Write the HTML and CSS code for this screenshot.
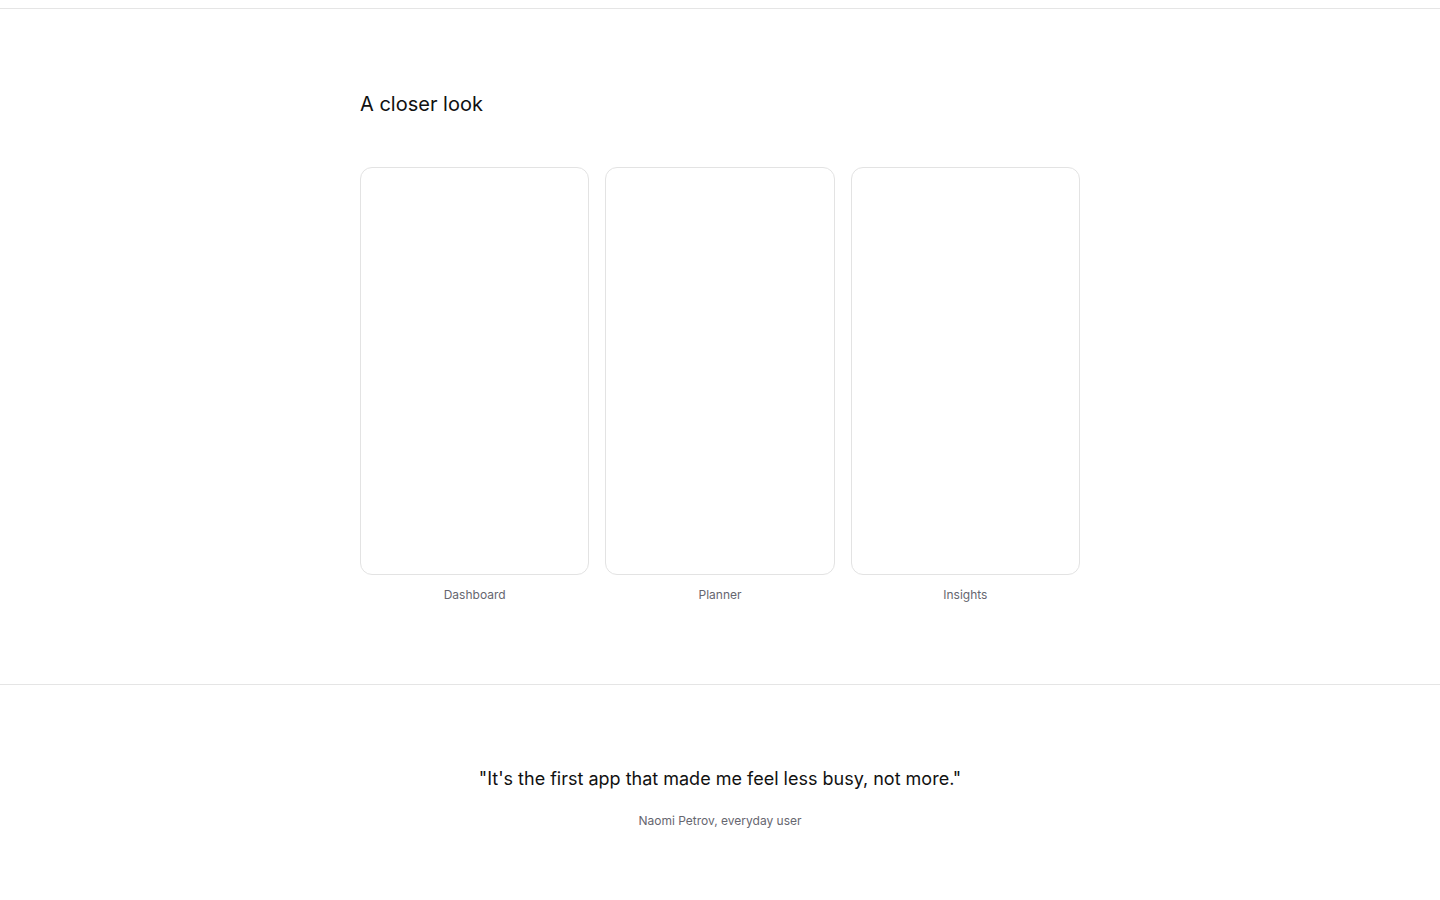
FILE: index.html
```html
<!DOCTYPE html>
<html lang="en">
<head>
<meta charset="utf-8">
<title>A closer look</title>
<link rel="stylesheet" href="styles.css">
</head>
<body>
<div class="topbar"></div>
<section class="gallery">
  <div class="container">
    <h2 class="heading">A closer look</h2>
    <div class="cards">
      <figure class="shot">
        <div class="frame"></div>
        <figcaption class="caption">Dashboard</figcaption>
      </figure>
      <figure class="shot">
        <div class="frame"></div>
        <figcaption class="caption">Planner</figcaption>
      </figure>
      <figure class="shot">
        <div class="frame"></div>
        <figcaption class="caption">Insights</figcaption>
      </figure>
    </div>
  </div>
</section>
<section class="testimonial">
  <blockquote class="quote">"It's the first app that made me feel less busy, not more."</blockquote>
  <p class="author">Naomi Petrov, everyday user</p>
</section>
</body>
</html>
```
FILE: styles.css
```css
* { box-sizing: border-box; }
html, body { margin: 0; padding: 0; background: #ffffff; }
body {
  font-family: Inter, "Noto Sans", "Liberation Sans", sans-serif;
  color: #111111;
  -webkit-font-smoothing: antialiased;
}
.topbar {
  margin-top: 8px;
  height: 1px;
  background: #e5e5e5;
}
.gallery {
  padding: 80px 0 80px;
  border-bottom: 1px solid #e5e5e5;
}
.container {
  width: 720px;
  margin: 0 auto;
}
.heading {
  margin: 0 0 48px;
  font-size: 20px;
  line-height: 30px;
  font-weight: 400;
  color: #111111;
}
.cards {
  display: grid;
  grid-template-columns: repeat(3, 1fr);
  gap: 16px;
}
.shot {
  margin: 0;
  display: flex;
  flex-direction: column;
  align-items: center;
}
.frame {
  width: 100%;
  aspect-ratio: 9 / 16;
  border: 1px solid #e3e3e3;
  border-radius: 12px;
  background: #ffffff;
}
.caption {
  margin-top: 11px;
  font-size: 12px;
  line-height: 18px;
  color: #66666f;
}
.testimonial {
  padding: 80px 0 80px;
  text-align: center;
}
.quote {
  margin: 0;
  font-size: 18px;
  line-height: 28px;
  color: #111111;
}
.author {
  margin: 19px 0 0;
  font-size: 12px;
  line-height: 18px;
  color: #66666f;
}
```
